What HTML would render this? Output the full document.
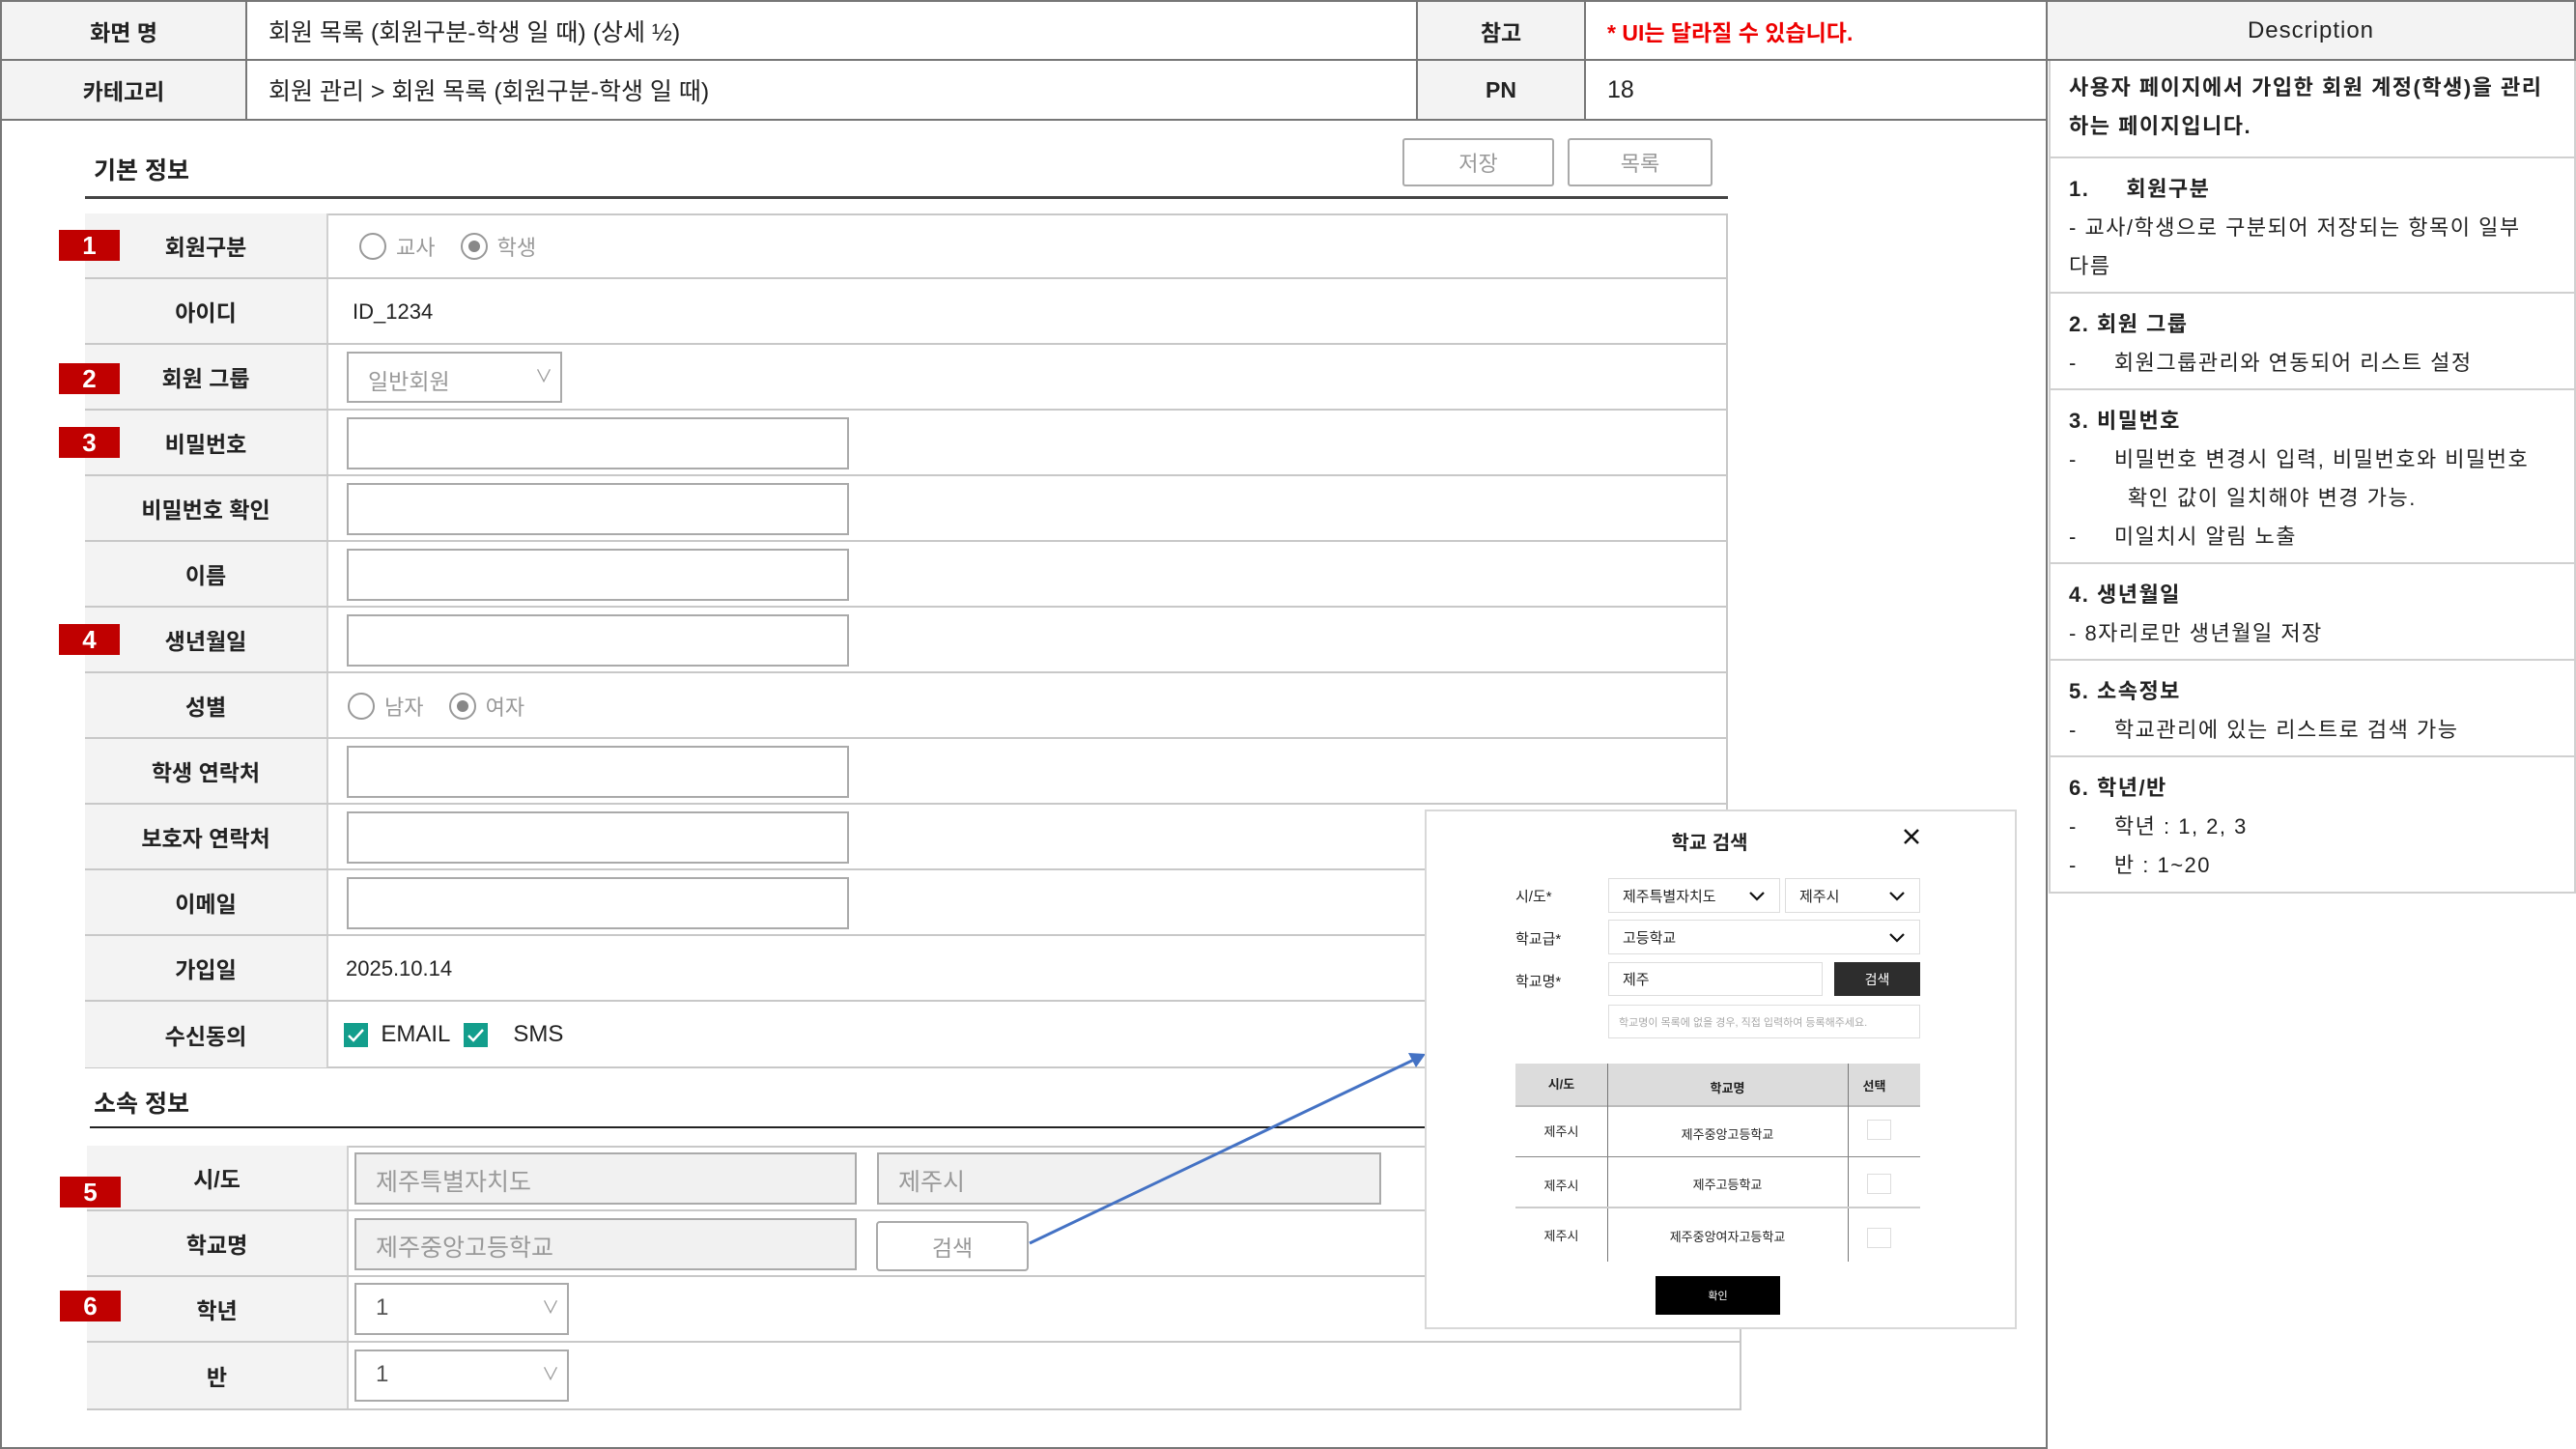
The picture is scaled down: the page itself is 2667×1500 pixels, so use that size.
<!DOCTYPE html>
<html><head><meta charset="utf-8"><style>
*{box-sizing:border-box;margin:0;padding:0}
body{width:2667px;height:1500px;position:relative;background:#fff;font-family:"Liberation Sans","Noto Sans CJK KR",sans-serif;color:#222;overflow:hidden}
.a{position:absolute}
.hc{position:absolute;background:#f3f3f3;border:2px solid #777;display:flex;align-items:center;justify-content:center;font-size:23px;font-weight:bold}
.hv{position:absolute;background:#fff;border:2px solid #777;display:flex;align-items:center;padding-left:22px;font-size:25px}
.row{position:absolute;left:88px;width:1701px;height:68px;border-bottom:2px solid #c8c8c8}
.lab{position:absolute;left:0;top:0;width:252px;height:100%;background:#f3f3f3;border-right:2px solid #d0d0d0;display:flex;align-items:center;justify-content:center;font-size:23px;font-weight:bold}
.inp{position:absolute;border:2px solid #aaa;background:#fff}
.badge{position:absolute;left:61px;width:63px;height:32px;background:#c00000;color:#fff;font-size:26px;font-weight:bold;display:flex;align-items:center;justify-content:center}
.val{position:absolute;font-size:22px;display:flex;align-items:center}
.radio{display:inline-block;width:28px;height:28px;border:2px solid #999;border-radius:50%;position:relative;vertical-align:middle}
.radio.on:after{content:"";position:absolute;left:6px;top:6px;width:12px;height:12px;border-radius:50%;background:#888}
.gray{color:#999}
.cb{display:inline-block;width:25px;height:25px;background:#139e8c;position:relative;vertical-align:middle}
.dsec{position:absolute;left:2121px;width:546px;border-bottom:2px solid #d0d0d0;padding-left:21px;font-size:22px;line-height:40px;letter-spacing:1.5px}
.m{position:absolute;font-size:15px}
.sel{position:absolute;border:1px solid #ddd;background:#fff;font-size:15px;display:flex;align-items:center;padding-left:14px}
</style></head><body>
<div class="a" style="left:0;top:0;width:2120px;height:1500px;border:2px solid #777;border-top:none"></div>
<div class="hc" style="left:0;top:0;width:256px;height:63px">화면 명</div>
<div class="hv" style="left:254px;top:0;width:1214px;height:63px">회원 목록 (회원구분-학생 일 때) (상세 ½)</div>
<div class="hc" style="left:1466px;top:0;width:176px;height:63px">참고</div>
<div class="hv" style="left:1640px;top:0;width:480px;height:63px;color:#e00;font-weight:bold;font-size:23px">* UI는 달라질 수 있습니다.</div>
<div class="hc" style="left:0;top:61px;width:256px;height:64px">카테고리</div>
<div class="hv" style="left:254px;top:61px;width:1214px;height:64px">회원 관리 &gt; 회원 목록 (회원구분-학생 일 때)</div>
<div class="hc" style="left:1466px;top:61px;width:176px;height:64px">PN</div>
<div class="hv" style="left:1640px;top:61px;width:480px;height:64px">18</div>
<div class="a" style="left:2118px;top:0;width:549px;height:1500px;border-left:2px solid #777"></div>
<div class="hc" style="left:2118px;top:0;width:549px;height:63px;font-weight:normal;font-size:24px;letter-spacing:1px">Description</div>
<div class="a" style="left:2121px;top:63px;width:546px;height:862px;border:2px solid #d0d0d0;border-top:none"></div>
<div class="dsec" style="top:63px;height:101px;padding-top:8px;font-weight:bold">사용자 페이지에서 가입한 회원 계정(학생)을 관리<br>하는 페이지입니다.</div>
<div class="dsec" style="top:164px;height:140px;padding-top:12px"><b>1.&nbsp;&nbsp;&nbsp;&nbsp;&nbsp;회원구분</b><br>- 교사/학생으로 구분되어 저장되는 항목이 일부<br>다름</div>
<div class="dsec" style="top:304px;height:100px;padding-top:12px"><b>2. 회원 그룹</b><br>-&nbsp;&nbsp;&nbsp;&nbsp;&nbsp;회원그룹관리와 연동되어 리스트 설정</div>
<div class="dsec" style="top:404px;height:180px;padding-top:12px"><b>3. 비밀번호</b><br>-&nbsp;&nbsp;&nbsp;&nbsp;&nbsp;비밀번호 변경시 입력, 비밀번호와 비밀번호<br>&nbsp;&nbsp;&nbsp;&nbsp;&nbsp;&nbsp;&nbsp;&nbsp;확인 값이 일치해야 변경 가능.<br>-&nbsp;&nbsp;&nbsp;&nbsp;&nbsp;미일치시 알림 노출</div>
<div class="dsec" style="top:584px;height:100px;padding-top:12px"><b>4. 생년월일</b><br>- 8자리로만 생년월일 저장</div>
<div class="dsec" style="top:684px;height:100px;padding-top:12px"><b>5. 소속정보</b><br>-&nbsp;&nbsp;&nbsp;&nbsp;&nbsp;학교관리에 있는 리스트로 검색 가능</div>
<div class="dsec" style="top:784px;height:141px;padding-top:12px"><b>6. 학년/반</b><br>-&nbsp;&nbsp;&nbsp;&nbsp;&nbsp;학년 : 1, 2, 3<br>-&nbsp;&nbsp;&nbsp;&nbsp;&nbsp;반 : 1~20</div>

<div class="a" style="left:97px;top:157px;font-size:25px;font-weight:bold">기본 정보</div>
<div class="a" style="left:88px;top:203px;width:1701px;height:3px;background:#444"></div>
<div class="a" style="left:1452px;top:143px;width:157px;height:50px;border:2px solid #aaa;border-radius:3px;color:#999;font-size:22px;display:flex;align-items:center;justify-content:center">저장</div>
<div class="a" style="left:1623px;top:143px;width:150px;height:50px;border:2px solid #aaa;border-radius:3px;color:#999;font-size:22px;display:flex;align-items:center;justify-content:center">목록</div>
<div class="a" style="left:88px;top:221px;width:1701px;height:885px;border:2px solid #c8c8c8"></div>

<div class="row" style="top:221px"><div class="lab">회원구분</div><div class="val" style="left:284px;height:68px;gap:10px"><span class="radio"></span><span class="gray">교사</span>&nbsp;<span class="radio on"></span><span class="gray">학생</span></div></div>
<div class="row" style="top:289px"><div class="lab">아이디</div><div class="val" style="left:277px;height:68px">ID_1234</div></div>
<div class="row" style="top:357px"><div class="lab">회원 그룹</div><div class="inp" style="left:271px;top:7px;width:223px;height:53px"><span class="a gray" style="left:20px;top:10px;font-size:23px">일반회원</span><span class="a gray" style="right:8px;top:10px;font-size:18px">∨</span></div></div>
<div class="row" style="top:425px"><div class="lab">비밀번호</div><div class="inp" style="left:271px;top:7px;width:520px;height:54px"></div></div>
<div class="row" style="top:493px"><div class="lab">비밀번호 확인</div><div class="inp" style="left:271px;top:7px;width:520px;height:54px"></div></div>
<div class="row" style="top:561px"><div class="lab">이름</div><div class="inp" style="left:271px;top:7px;width:520px;height:54px"></div></div>
<div class="row" style="top:629px"><div class="lab">생년월일</div><div class="inp" style="left:271px;top:7px;width:520px;height:54px"></div></div>
<div class="row" style="top:697px"><div class="lab">성별</div><div class="val" style="left:272px;height:68px;gap:10px"><span class="radio"></span><span class="gray">남자</span>&nbsp;<span class="radio on"></span><span class="gray">여자</span></div></div>
<div class="row" style="top:765px"><div class="lab">학생 연락처</div><div class="inp" style="left:271px;top:7px;width:520px;height:54px"></div></div>
<div class="row" style="top:833px"><div class="lab">보호자 연락처</div><div class="inp" style="left:271px;top:7px;width:520px;height:54px"></div></div>
<div class="row" style="top:901px"><div class="lab">이메일</div><div class="inp" style="left:271px;top:7px;width:520px;height:54px"></div></div>
<div class="row" style="top:969px"><div class="lab">가입일</div><div class="val" style="left:270px;height:68px">2025.10.14</div></div>
<div class="row" style="top:1037px;border-bottom:none"><div class="lab">수신동의</div><div class="val" style="left:268px;height:68px;font-size:24px"><span class="cb"><svg width="25" height="25"><path d="M5 13l5 5 10-11" stroke="#fff" stroke-width="2.5" fill="none"/></svg></span>&nbsp;&nbsp;EMAIL&nbsp;&nbsp;<span class="cb"><svg width="25" height="25"><path d="M5 13l5 5 10-11" stroke="#fff" stroke-width="2.5" fill="none"/></svg></span>&nbsp;&nbsp;&nbsp;&nbsp;SMS</div></div>

<div class="badge" style="top:238px">1</div>
<div class="badge" style="top:376px">2</div>
<div class="badge" style="top:442px">3</div>
<div class="badge" style="top:646px">4</div>

<div class="a" style="left:97px;top:1123px;font-size:25px;font-weight:bold">소속 정보</div>
<div class="a" style="left:93px;top:1166px;width:1710px;height:2px;background:#222"></div>
<div class="a" style="left:90px;top:1186px;width:1713px;height:274px;border:2px solid #c8c8c8"></div>
<div class="row" style="top:1186px;left:90px;width:1713px"><div class="lab" style="width:271px">시/도</div>
<div class="inp" style="left:277px;top:7px;width:520px;height:54px;background:#f1f1f1"><span class="a gray" style="left:20px;top:9px;font-size:25px">제주특별자치도</span></div>
<div class="inp" style="left:818px;top:7px;width:522px;height:54px;background:#f1f1f1"><span class="a gray" style="left:20px;top:9px;font-size:25px">제주시</span></div></div>
<div class="row" style="top:1254px;left:90px;width:1713px"><div class="lab" style="width:271px">학교명</div>
<div class="inp" style="left:277px;top:7px;width:520px;height:54px;background:#f1f1f1"><span class="a gray" style="left:20px;top:9px;font-size:25px">제주중앙고등학교</span></div>
<div class="inp" style="left:817px;top:10px;width:158px;height:52px;border-radius:4px;display:flex;align-items:center;justify-content:center;font-size:23px;color:#999">검색</div></div>
<div class="row" style="top:1322px;left:90px;width:1713px"><div class="lab" style="width:271px">학년</div>
<div class="inp" style="left:277px;top:6px;width:222px;height:54px"><span class="a" style="left:20px;top:10px;font-size:24px;color:#555">1</span><span class="a gray" style="right:8px;top:10px;font-size:18px">∨</span></div></div>
<div class="row" style="top:1390px;left:90px;width:1713px;border-bottom:none"><div class="lab" style="width:271px">반</div>
<div class="inp" style="left:277px;top:7px;width:222px;height:54px"><span class="a" style="left:20px;top:10px;font-size:24px;color:#555">1</span><span class="a gray" style="right:8px;top:10px;font-size:18px">∨</span></div></div>
<div class="badge" style="top:1218px;left:62px">5</div>
<div class="badge" style="top:1336px;left:62px">6</div>

<svg class="a" style="left:0;top:0" width="2667" height="1500"><line x1="1066" y1="1287" x2="1466" y2="1096" stroke="#4472c4" stroke-width="3"/><polygon points="1476,1091 1458,1090 1466,1105" fill="#4472c4"/></svg>

<div class="a" style="left:1475px;top:838px;width:613px;height:538px;background:#fff;border:2px solid #d8d8d8"></div>
<div class="a" style="left:1700px;top:856px;width:140px;text-align:center;font-size:20px;font-weight:bold">학교 검색</div>
<svg class="a" style="left:1970px;top:857px" width="18" height="18"><path d="M2 2L16 16M16 2L2 16" stroke="#111" stroke-width="2.5"/></svg>
<div class="m" style="left:1569px;top:917px">시/도*</div>
<div class="m" style="left:1569px;top:961px">학교급*</div>
<div class="m" style="left:1569px;top:1005px">학교명*</div>
<div class="sel" style="left:1665px;top:909px;width:178px;height:36px">제주특별자치도<svg class="a" style="right:14px;top:12px" width="18" height="11"><path d="M2 2l7 7 7-7" stroke="#111" stroke-width="2.2" fill="none"/></svg></div>
<div class="sel" style="left:1848px;top:909px;width:140px;height:36px">제주시<svg class="a" style="right:14px;top:12px" width="18" height="11"><path d="M2 2l7 7 7-7" stroke="#111" stroke-width="2.2" fill="none"/></svg></div>
<div class="sel" style="left:1665px;top:952px;width:323px;height:36px">고등학교<svg class="a" style="right:14px;top:12px" width="18" height="11"><path d="M2 2l7 7 7-7" stroke="#111" stroke-width="2.2" fill="none"/></svg></div>
<div class="sel" style="left:1665px;top:996px;width:222px;height:35px">제주</div>
<div class="a" style="left:1899px;top:996px;width:89px;height:35px;background:#2d2d2d;color:#fff;font-size:14px;display:flex;align-items:center;justify-content:center">검색</div>
<div class="sel" style="left:1665px;top:1040px;width:323px;height:35px;font-size:11px;color:#aaa;padding-left:10px">학교명이 목록에 없을 경우, 직접 입력하여 등록해주세요.</div>
<div class="a" style="left:1569px;top:1101px;width:419px;height:45px;background:#dcdcdc;border-bottom:2px solid #bbb"></div>
<div class="a" style="left:1664px;top:1101px;width:1px;height:205px;background:#777"></div>
<div class="a" style="left:1913px;top:1101px;width:1px;height:205px;background:#777"></div>
<div class="a" style="left:1569px;top:1197px;width:419px;height:1px;background:#888"></div>
<div class="a" style="left:1569px;top:1249px;width:419px;height:2px;background:#ccc"></div>
<div class="m" style="left:1569px;top:1112px;width:95px;text-align:center;font-size:13px;font-weight:bold">시/도</div>
<div class="m" style="left:1664px;top:1116px;width:249px;text-align:center;font-size:13px;font-weight:bold">학교명</div>
<div class="m" style="left:1913px;top:1114px;width:55px;text-align:center;font-size:13px;font-weight:bold">선택</div>
<div class="m" style="left:1569px;top:1161px;width:95px;text-align:center;font-size:13px">제주시</div>
<div class="m" style="left:1664px;top:1164px;width:249px;text-align:center;font-size:13px">제주중앙고등학교</div>
<div class="m" style="left:1569px;top:1217px;width:95px;text-align:center;font-size:13px">제주시</div>
<div class="m" style="left:1664px;top:1216px;width:249px;text-align:center;font-size:13px">제주고등학교</div>
<div class="m" style="left:1569px;top:1269px;width:95px;text-align:center;font-size:13px">제주시</div>
<div class="m" style="left:1664px;top:1270px;width:249px;text-align:center;font-size:13px">제주중앙여자고등학교</div>
<div class="a" style="left:1933px;top:1159px;width:25px;height:21px;border:1px solid #ddd"></div>
<div class="a" style="left:1933px;top:1215px;width:25px;height:21px;border:1px solid #ddd"></div>
<div class="a" style="left:1933px;top:1271px;width:25px;height:21px;border:1px solid #ddd"></div>
<div class="a" style="left:1714px;top:1321px;width:129px;height:40px;background:#000;color:#fff;font-size:11px;display:flex;align-items:center;justify-content:center">확인</div>
</body></html>
